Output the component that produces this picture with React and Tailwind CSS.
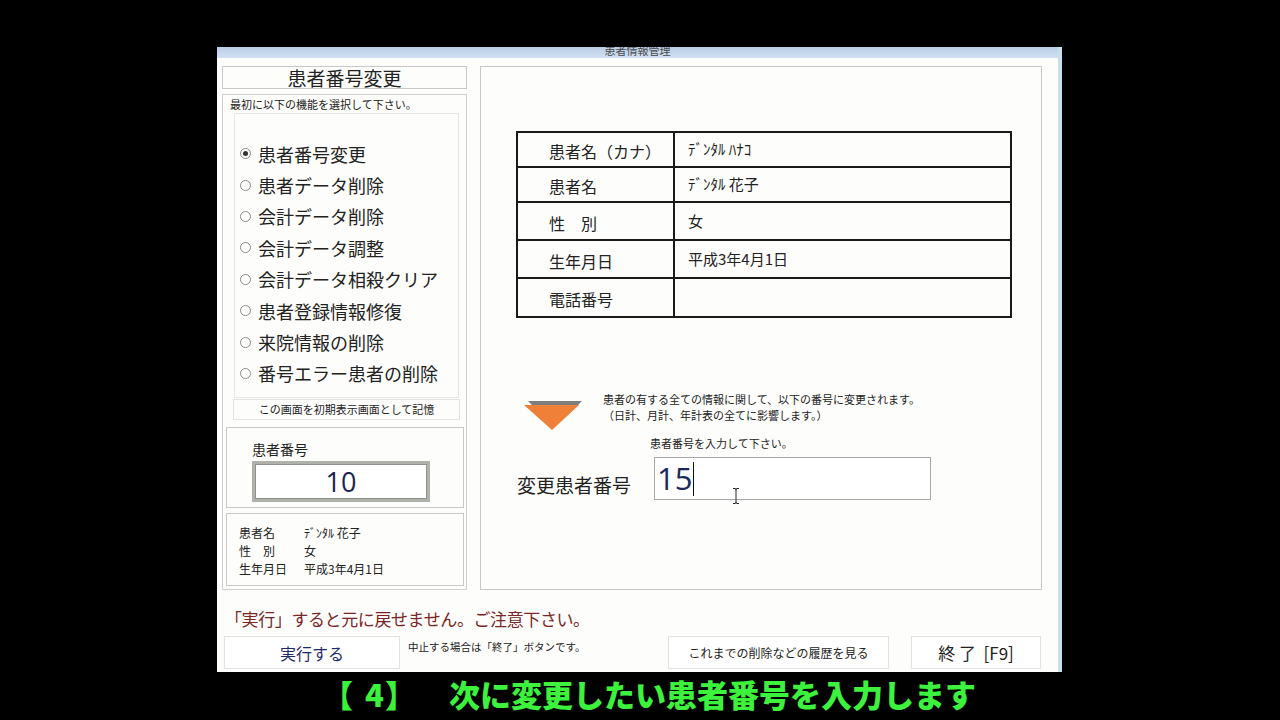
import React from 'react'

const JP = { fontFamily: '"Noto Sans CJK JP", "Noto Sans", sans-serif' }
const NUM = { fontFamily: '"Open Sans", "Noto Sans", sans-serif' }

const MENU = [
  '患者番号変更',
  '患者データ削除',
  '会計データ削除',
  '会計データ調整',
  '会計データ相殺クリア',
  '患者登録情報修復',
  '来院情報の削除',
  '番号エラー患者の削除',
]

const ROWS = [
  { label: '患者名（カナ）', value: 'ﾃﾞﾝﾀﾙ ﾊﾅｺ', h: 'h-[33px]' },
  { label: '患者名', value: 'ﾃﾞﾝﾀﾙ 花子', h: 'h-[33px]' },
  { label: '性　別', value: '女', h: 'h-[36px]' },
  { label: '生年月日', value: '平成3年4月1日', h: 'h-[36px]' },
  { label: '電話番号', value: '', h: 'h-[37px]' },
]

function Radio({ checked }) {
  return (
    <span className="w-[11px] h-[11px] rounded-full border border-[#8a8a8a] bg-white flex items-center justify-center flex-shrink-0">
      {checked && <span className="w-[5px] h-[5px] rounded-full bg-[#333]" />}
    </span>
  )
}

function LeftColumn() {
  return (
    <div className="w-[245px] flex flex-col">
      <div className="h-[23px] border border-[#c8c8c8] flex items-center justify-center text-[19px] leading-none text-[#222]">
        患者番号変更
      </div>

      <div className="mt-[5px] h-[496px] border border-[#cfcfcf] flex flex-col">
        <p className="pl-[7px] pt-[2px] text-[11px] leading-[14px] text-[#222]">最初に以下の機能を選択して下さい。</p>
        <div className="ml-[11px] w-[225px] mt-[2px] h-[285px] border border-[#e6e6e6] pt-[24px] pl-[5px]">
          {MENU.map((m, i) => (
            <div key={m} className="flex items-center gap-[7px] h-[31.4px]">
              <Radio checked={i === 0} />
              <span className="text-[18px] text-[#222] leading-none">{m}</span>
            </div>
          ))}
        </div>
        <div className="ml-[10px] w-[227px] mt-[1px] h-[21px] border border-[#e2e2e2] flex items-center justify-center text-[11px] text-[#222]">
          この画面を初期表示画面として記憶
        </div>

        <div className="ml-[3px] w-[238px] mt-[7px] h-[81px] border border-[#c8c8c8] pl-[25px] pt-[12px]">
          <p className="text-[14px] leading-[18px] text-[#222]">患者番号</p>
          <div className="mt-[3px] w-[178px] h-[41px] bg-[#aeb2aa] p-[3px]">
            <div className="w-full h-full bg-white border border-[#8e928a] flex items-center justify-center">
              <span style={NUM} className="text-[27px] leading-none text-[#1b2450]">10</span>
            </div>
          </div>
        </div>

        <div className="ml-[3px] w-[238px] mt-[5px] h-[73px] border border-[#c8c8c8] pl-[12px] pt-[10px] text-[12px] text-[#222]">
          <div className="flex h-[18px] items-center">
            <span className="w-[65px]">患者名</span>
            <span>ﾃﾞﾝﾀﾙ 花子</span>
          </div>
          <div className="flex h-[18px] items-center">
            <span className="w-[65px]">性　別</span>
            <span>女</span>
          </div>
          <div className="flex h-[18px] items-center">
            <span className="w-[65px]">生年月日</span>
            <span>平成3年4月1日</span>
          </div>
        </div>
      </div>
    </div>
  )
}

function RightPanel() {
  return (
    <div className="w-[562px] h-[524px] border border-[#c8c8c8] pl-[35px] pt-[64px]">
      {/* patient table */}
      <div className="w-[496px] border-2 border-[#1a1a1a] flex flex-col">
        {ROWS.map((r, i) => (
          <div key={r.label} className={`flex ${i > 0 ? 'border-t-2 border-[#1a1a1a]' : ''}`}>
            <div className={`${r.h} w-[157px] border-r-2 border-[#1a1a1a] pl-[31px] pt-[3px] flex items-center text-[16px] text-[#222]`}>
              {r.label}
            </div>
            <div className={`${r.h} flex-1 pl-[13px] flex items-center text-[15px] text-[#222]`}>{r.value}</div>
          </div>
        ))}
      </div>

      {/* notice */}
      <div className="mt-[73px] flex items-start">
        <svg width="60" height="32" viewBox="0 0 60 32" className="ml-[8px] mt-[9px]">
          <polygon points="4,1 58,1 54,5 8,5" fill="#7d7d7d" />
          <polygon points="0,5 55,5 28,30" fill="#f07f38" />
        </svg>
        <div className="ml-[19px] text-[11px] leading-[16px] text-[#222]">
          <p>患者の有する全ての情報に関して、以下の番号に変更されます。</p>
          <p>（日計、月計、年計表の全てに影響します。）</p>
        </div>
      </div>

      <p className="ml-[134px] mt-[3px] text-[11px] leading-[16px] text-[#222]">患者番号を入力して下さい。</p>

      <div className="mt-[6px] flex items-start">
        <span className="w-[138px] pl-[1px] mt-[16px] text-[19px] leading-[24px] text-[#222]">変更患者番号</span>
        <div className="relative w-[277px] h-[43px] border border-[#a8a8a8] bg-white flex items-center pl-[2px]">
          <span style={NUM} className="text-[31px] leading-none text-[#1b2a5a]">15</span>
          <span className="ml-[1px] w-px h-[34px] bg-[#111]" />
          {/* I-beam mouse pointer */}
          <svg width="8" height="16" viewBox="0 0 8 16" className="absolute left-[77px] top-[30px]">
            <path d="M1 0.5 H3 Q4 0.5 4 2 V14 Q4 15.5 3 15.5 H1 M7 0.5 H5 Q4 0.5 4 2 M4 14 Q4 15.5 5 15.5 H7" stroke="#222" strokeWidth="1" fill="none" />
          </svg>
        </div>
      </div>
    </div>
  )
}

export default function App() {
  return (
    <div style={JP} className="w-[1280px] h-[720px] bg-black flex flex-col overflow-hidden">
      <div className="ml-[217px] mt-[47px] w-[845px] h-[625px] bg-[#fdfdfb] border-r-4 border-[#c8e0ec] flex flex-col">
        {/* title bar */}
        <div className="h-[11px] bg-gradient-to-b from-[#b9cde6] to-[#d2e1f2] flex justify-center overflow-hidden">
          <span className="text-[11px] leading-[11px] -mt-[2px] text-[#4a4a4a]">患者情報管理</span>
        </div>

        <div className="flex pl-[5px] pt-[8px] gap-[13px]">
          <LeftColumn />
          <RightPanel />
        </div>

        <p className="ml-[8px] mt-[17px] text-[17px] leading-[24px] tracking-[-0.4px] text-[#7a2626]">「実行」すると元に戻せません。ご注意下さい。</p>

        <div className="mt-[5px] flex items-start">
          <div className="ml-[7px] w-[176px] h-[33px] border border-[#e2e2e2] bg-white flex items-center justify-center text-[16px] text-[#1e2a6a]">
            実行する
          </div>
          <p className="ml-[8px] w-[180px] mt-[3px] text-[10.5px] text-[#222]">中止する場合は「終了」ボタンです。</p>
          <div className="ml-[80px] w-[221px] h-[33px] border border-[#e2e2e2] bg-white flex items-center justify-center text-[12px] text-[#222]">
            これまでの削除などの履歴を見る
          </div>
          <div className="ml-[22px] w-[130px] h-[33px] border border-[#e2e2e2] bg-white flex items-center justify-center text-[17px] text-[#222]">
            終 了&nbsp;&nbsp;[F9]
          </div>
        </div>
      </div>

      {/* caption */}
      <div className="mt-[5px] flex items-center pl-[322px] text-[31px] leading-[34px] font-black text-[#3cf23c]">
        <span className="w-[31px]">【</span>
        <span className="ml-[12px]">4</span>
        <span className="ml-[1px] w-[31px]">】</span>
        <span className="ml-[33px]">次に変更したい患者番号を入力します</span>
      </div>
    </div>
  )
}
